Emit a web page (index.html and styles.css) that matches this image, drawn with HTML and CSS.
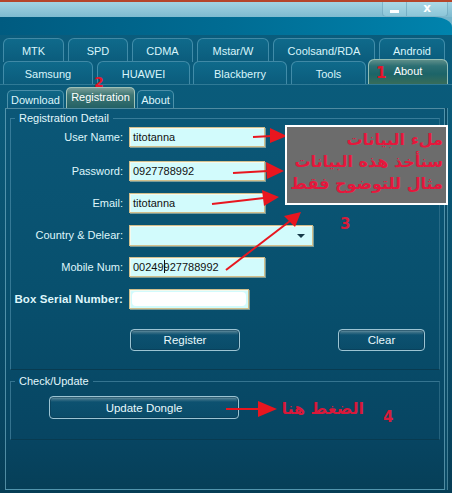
FILE: index.html
```html
<!DOCTYPE html>
<html>
<head>
<meta charset="utf-8">
<title>Registration</title>
<link rel="stylesheet" href="styles.css">
</head>
<body>
<div class="window">
  <div class="head">
    <div class="strip"></div>
    <div class="caption">
      <div class="winbtns">
        <span class="wb min"><i></i></span>
        <span class="wb close">x</span>
      </div>
    </div>
    <div class="band"></div>
  </div>

  <div class="tabs">
    <div class="tabrow r1">
      <div class="tab t-mtk">MTK</div>
      <div class="tab t-spd">SPD</div>
      <div class="tab t-cdma">CDMA</div>
      <div class="tab t-mstar">Mstar/W</div>
      <div class="tab t-cool">Coolsand/RDA</div>
      <div class="tab t-android">Android</div>
    </div>
    <div class="tabrow r2">
      <div class="tab t-samsung">Samsung</div>
      <div class="tab t-huawei">HUAWEI</div>
      <div class="tab t-bb">Blackberry</div>
      <div class="tab t-tools">Tools</div>
      <div class="tab t-about active">About</div>
    </div>
  </div>

  <div class="subtabs">
    <div class="stab s-download">Download</div>
    <div class="stab s-reg active">Registration</div>
    <div class="stab s-about">About</div>
  </div>

  <div class="panel">
    <fieldset class="group detail">
      <legend>Registration Detail</legend>
      <div class="form">
        <div class="row first">
          <label>User Name:</label>
          <div class="field w136">titotanna</div>
        </div>
        <div class="row">
          <label>Password:</label>
          <div class="field w136">0927788992</div>
        </div>
        <div class="row">
          <label>Email:</label>
          <div class="field w136">titotanna</div>
        </div>
        <div class="row">
          <label>Country &amp; Delear:</label>
          <div class="field combo"><span class="caret-down"></span></div>
        </div>
        <div class="row">
          <label>Mobile Num:</label>
          <div class="field w136">00249<span class="cursor"></span>927788992</div>
        </div>
        <div class="row">
          <label class="strong">Box Serial Number:</label>
          <div class="field serial"><span class="blank"></span></div>
        </div>
      </div>
      <div class="actions">
        <button class="btn reg">Register</button>
        <button class="btn clear">Clear</button>
      </div>
    </fieldset>

    <fieldset class="group check">
      <legend>Check/Update</legend>
      <div class="check-body">
        <button class="btn dongle">Update Dongle</button>
      </div>
    </fieldset>
  </div>

  <svg class="marks" width="452" height="493" viewBox="0 0 452 493">
    <g stroke="#e8161f" stroke-width="2" fill="none">
      <line x1="253" y1="137" x2="272" y2="136"/>
      <line x1="233" y1="173" x2="268" y2="171"/>
      <line x1="212" y1="204" x2="264" y2="198"/>
      <line x1="226" y1="270" x2="290" y2="221"/>
      <line x1="226" y1="409" x2="260" y2="409"/>
    </g>
    <g fill="#e8161f">
      <polygon points="287,136 270,128 270,143"/>
      <polygon points="284,171 266,162 267,179"/>
      <polygon points="279,197 262,190 264,206"/>
      <polygon points="301,212 284,216 295,227"/>
      <polygon points="277,409 258,401 258,417"/>
    </g>
  </svg>

  <div class="note">
    <p>ملء البيانات&nbsp;</p>
    <p>سنأخذ هذه البيانات</p>
    <p>مثال للتوضوح فقط</p>
  </div>
  <div class="num n1">1</div>
  <div class="num n2">2</div>
  <div class="num n3">3</div>
  <div class="num n4">4</div>
  <div class="hint">الضغط هنا</div>
</div>
</body>
</html>
```

FILE: styles.css
```css
* { box-sizing: border-box; }

html, body {
  margin: 0;
  padding: 0;
  background: #06415a;
}

body {
  font-family: "Liberation Sans", Arial, sans-serif;
  font-size: 11px;
  color: #dff6fb;
}

.window {
  position: relative;
  width: 452px;
  height: 493px;
  overflow: hidden;
  background: linear-gradient(#0a5d7e 0px, #0a5a79 120px, #074561 420px, #063d55 493px);
}

/* caption + dark band */
.head {
  background: #73b4cb;
}

.strip {
  height: 2px;
  background: #b5452b;
}

.caption {
  height: 15px;
  background: linear-gradient(#a3d2e2, #7dbbd0);
  display: flex;
  justify-content: flex-end;
  padding-right: 4px;
}

.winbtns {
  display: flex;
  height: 15px;
}

.wb {
  display: flex;
  align-items: center;
  justify-content: center;
  height: 15px;
  border: 1px solid rgba(90, 150, 175, 0.5);
  border-top: none;
  background: linear-gradient(#acd8e6, #8cc6d8);
  color: #ffffff;
  font-family: "DejaVu Sans", sans-serif;
  font-weight: bold;
  font-size: 12px;
  line-height: 1;
}

.wb.min {
  width: 24px;
  border-radius: 0 0 0 4px;
  border-right: none;
  padding-top: 4px;
}

.wb.min i {
  display: block;
  width: 9px;
  height: 3px;
  background: #ffffff;
}

.wb.close {
  width: 42px;
  border-radius: 0 0 4px 0;
  padding-bottom: 2px;
}

.band {
  height: 18px;
  background: linear-gradient(90deg, #005b80 0%, #006c93 50%, #0083ad 100%);
  border-top-right-radius: 18px 10px;
}

/* main tab strip */
.tabs {
  padding-top: 3px;
  border-bottom: 1px solid rgba(120, 180, 200, 0.35);
}

.tabrow {
  display: flex;
  padding-left: 3px;
}

.r1 { height: 24px; gap: 4px; }
.r2 { height: 23px; margin-top: -1px; }

.tab {
  display: flex;
  align-items: center;
  justify-content: center;
  height: 100%;
  border: 1px solid rgba(110, 175, 200, 0.55);
  border-bottom: none;
  border-radius: 6px 6px 0 0;
  background: linear-gradient(#0f6a8b, #0b5c7c);
  color: #d9f5fb;
  font-size: 11px;
  padding-top: 1px;
}

.t-mtk { width: 61px; }
.t-spd { width: 60px; }
.t-cdma { width: 61px; }
.t-mstar { width: 72px; }
.t-cool { width: 102px; }
.t-android { width: 66px; }

.t-samsung { width: 90px; margin-right: 4px; }
.t-huawei { width: 93px; margin-right: 3px; }
.t-bb { width: 94px; margin-right: 4px; }
.t-tools { width: 75px; margin-right: 2px; }
.t-about { width: 80px; }

.tab.active {
  height: 25px;
  margin-top: -2px;
  align-items: flex-start;
  padding-top: 5px;
  border-color: rgba(190, 225, 215, 0.7);
  background: linear-gradient(#5e8f8a 0px, #2c6f73 6px, #1c6468 14px, #3a6d58 25px);
  color: #ffffff;
}

/* inner tab strip */
.subtabs {
  display: flex;
  align-items: flex-end;
  height: 23px;
  padding-left: 7px;
  gap: 2px;
}

.stab {
  display: flex;
  align-items: center;
  justify-content: center;
  height: 18px;
  border: 1px solid rgba(120, 180, 200, 0.6);
  border-bottom: none;
  border-radius: 5px 5px 0 0;
  background: linear-gradient(#0f6786, #0b587a);
  color: #dff6fb;
  font-size: 11px;
}

.s-download { width: 57px; }
.s-about { width: 37px; }

.stab.active {
  width: 69px;
  height: 21px;
  align-items: flex-start;
  padding-top: 3px;
  line-height: 12px;
  border-color: rgba(200, 225, 210, 0.75);
  background: linear-gradient(#789d98 0px, #3f7775 7px, #215f63 21px);
  color: #ffffff;
}

/* content panel */
.panel {
  height: 382px;
  margin: 0 7px 0 5px;
  border: 1px solid rgba(130, 190, 210, 0.6);
  box-shadow: 2px 0 0 #0a4b66, 3px 0 0 rgba(130, 190, 210, 0.5);
  background: linear-gradient(#0b5777, #08506e 180px, #074562 330px, #063f58);
  padding: 0 4px;
}

.group {
  margin: 3px 0 0;
  padding: 0;
  border: 1px solid rgba(110, 170, 195, 0.45);
  border-bottom-color: #083b51;
  border-right-color: rgba(70, 130, 155, 0.5);
  min-width: 0;
}

.group legend {
  margin-left: 4px;
  padding: 0 4px;
  font-size: 11px;
  line-height: 13px;
  color: #e2f7fc;
}

.form {
  display: flex;
  flex-direction: column;
  gap: 12px;
  padding-top: 2px;
}

.row {
  display: flex;
  align-items: center;
  height: 20px;
}

.row.first { margin-bottom: 2px; }

.row label {
  width: 112px;
  text-align: right;
  margin-right: 6px;
  color: #dff6fb;
  white-space: nowrap;
}

.row label.strong {
  font-weight: bold;
  font-size: 11.5px;
  letter-spacing: 0.1px;
}

.field {
  height: 20px;
  background: #d2fbfc;
  border: 1px solid #d1bf8c;
  box-shadow: inset 1px 1px 0 #f3f9ee, 1px 1px 0 rgba(240, 230, 190, 0.5);
  color: #111111;
  font-size: 11px;
  line-height: 18px;
  padding-left: 3px;
  position: relative;
}

.w136 { width: 136px; }

.combo {
  width: 184px;
  height: 21px;
}

.caret-down {
  position: absolute;
  right: 7px;
  top: 8px;
  width: 0;
  height: 0;
  border-left: 4px solid transparent;
  border-right: 4px solid transparent;
  border-top: 4px solid #163a48;
}

.cursor {
  display: inline-block;
  width: 1px;
  height: 13px;
  background: #111111;
  vertical-align: -2px;
  margin-right: -1px;
}

.serial {
  width: 120px;
  padding: 2px;
}

.blank {
  display: block;
  height: 14px;
  background: #ffffff;
  border-radius: 4px;
}

.actions {
  display: flex;
  justify-content: space-between;
  padding: 20px 14px 18px 119px;
}

.btn {
  height: 22px;
  border: 1px solid #9cc4d3;
  border-radius: 4px;
  background: linear-gradient(#7ea2b0 0px, #3f7389 2px, #0c5170 5px, #0a4c69 100%);
  color: #e9f9fc;
  font-family: "Liberation Sans", Arial, sans-serif;
  font-size: 11.5px;
  padding: 0;
  box-shadow: inset 0 0 0 1px rgba(10, 60, 85, 0.6);
}

.btn.reg { width: 110px; }
.btn.clear { width: 87px; }

.check {
  margin-top: 5px;
}

.check-body {
  padding: 8px 0 20px 38px;
}

.btn.dongle {
  width: 190px;
  height: 23px;
  display: block;
}

/* annotation layer */
.marks {
  position: absolute;
  left: 0;
  top: 0;
  pointer-events: none;
}

.note {
  position: absolute;
  left: 285px;
  top: 125px;
  width: 163px;
  height: 80px;
  background: #6c6c6c;
  border: 2px solid #ffffff;
  direction: rtl;
  text-align: right;
  padding: 2px 3px 0 0;
  font-family: "DejaVu Sans", sans-serif;
  font-weight: bold;
  font-size: 16px;
  color: #e5173c;
}

.note p {
  margin: 0;
  line-height: 22px;
  white-space: nowrap;
}

.num {
  position: absolute;
  font-family: "DejaVu Sans", sans-serif;
  font-weight: bold;
  font-size: 15px;
  line-height: 15px;
  color: #e5142a;
}

.n1 { left: 376px; top: 66px; }
.n2 { left: 94px; top: 76px; font-size: 14px; line-height: 12px; }
.n3 { left: 340px; top: 217px; color: #d81c3a; }
.n4 { left: 383px; top: 410px; color: #d81c3a; }

.hint {
  position: absolute;
  left: 276px;
  top: 399px;
  width: 88px;
  direction: rtl;
  text-align: right;
  font-family: "DejaVu Sans", sans-serif;
  font-weight: bold;
  font-size: 16px;
  line-height: 20px;
  color: #d8183a;
  white-space: nowrap;
}
```
